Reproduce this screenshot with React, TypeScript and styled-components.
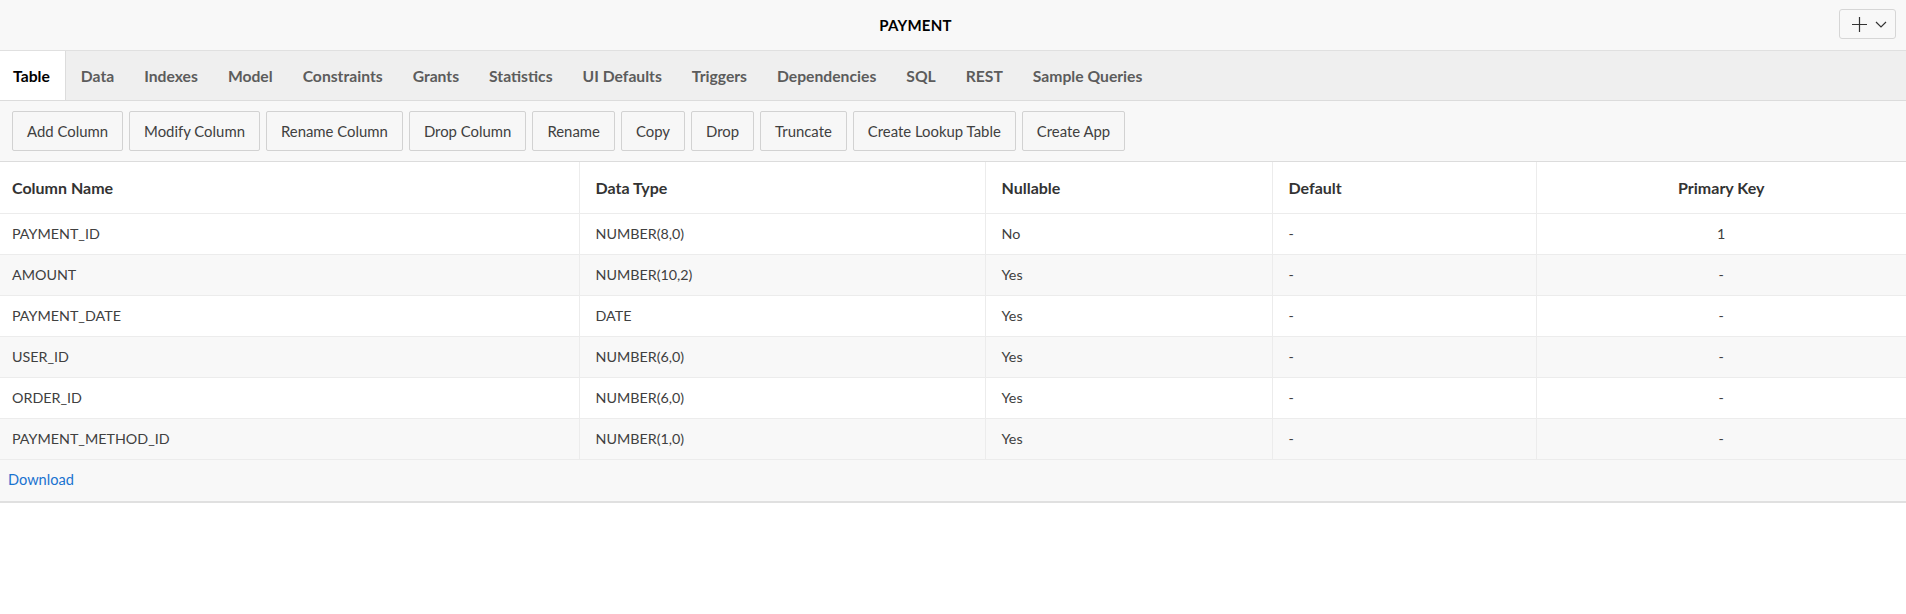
import React from "react";
import styled, { createGlobalStyle } from "styled-components";

const GlobalStyle = createGlobalStyle`
  html, body { margin: 0; padding: 0; background: #ffffff; }
  body { font-family: Lato, "Open Sans", sans-serif; color: #404040; }
  * { box-sizing: border-box; }
`;

const Page = styled.div`
  width: 1906px;
  display: flex;
  flex-direction: column;
`;

const TitleBar = styled.header`
  height: 51px;
  display: flex;
  align-items: center;
  gap: 8px;
  padding-right: 10px;
  background: #f8f8f8;
  border-bottom: 1px solid #e0e0e0;
`;

const Title = styled.h1`
  flex: 1;
  margin: 0;
  text-align: center;
  font-size: 15px;
  font-weight: 700;
  color: #000;
  letter-spacing: 0.2px;
`;

const MenuButton = styled.button`
  width: 57px;
  height: 30px;
  margin-bottom: 2px;
  display: flex;
  align-items: center;
  justify-content: center;
  gap: 7px;
  padding: 0 0 0 2px;
  background: #f8f8f8;
  border: 1px solid #d6d6d6;
  border-radius: 3px;
  color: #333;
`;

const TabBar = styled.nav`
  height: 50px;
  display: flex;
  background: #efefef;
  border-bottom: 1px solid #dcdcdc;
`;

const Tab = styled.div<{ $active?: boolean }>`
  display: flex;
  align-items: center;
  padding: 0 15px;
  font-size: 15.7px;
  font-weight: 700;
  color: ${(p) => (p.$active ? "#000" : "#5c5c5c")};
  background: ${(p) => (p.$active ? "#ffffff" : "transparent")};
  border-right: ${(p) => (p.$active ? "1px solid #dcdcdc" : "none")};
  padding-left: ${(p) => (p.$active ? "13px" : "15px")};
`;

const Toolbar = styled.div`
  display: flex;
  gap: 6px;
  padding: 10px 12px;
  background: #f8f8f8;
  border-bottom: 1px solid #dcdcdc;
`;

const ToolButton = styled.button`
  height: 40px;
  padding: 0 14px;
  font-family: Lato, "Open Sans", sans-serif;
  font-size: 14.9px;
  color: #404040;
  background: #f7f7f7;
  border: 1px solid #d2d2d2;
  border-radius: 2px;
`;

const Table = styled.table`
  width: 100%;
  border-collapse: collapse;
  table-layout: fixed;
`;

const Col = styled.col<{ $w: number }>`
  width: ${(p) => p.$w}px;
`;

const HeadCell = styled.th<{ $center?: boolean; $first?: boolean }>`
  height: 51px;
  padding: 0 ${(p) => (p.$center ? "0" : "16px")} 0 ${(p) => (p.$first ? "12px" : p.$center ? "0" : "16px")};
  text-align: ${(p) => (p.$center ? "center" : "left")};
  font-size: 16px;
  font-weight: 700;
  color: #333;
  background: #fff;
  border-bottom: 1px solid #ececec;
  border-right: 1px solid #ececec;
  &:last-child { border-right: none; }
`;

const Row = styled.tr<{ $alt?: boolean }>`
  background: ${(p) => (p.$alt ? "#f8f8f8" : "#ffffff")};
`;

const Cell = styled.td<{ $center?: boolean; $first?: boolean }>`
  height: 41px;
  padding: 0 ${(p) => (p.$center ? "0" : "16px")} 0 ${(p) => (p.$first ? "12px" : p.$center ? "0" : "16px")};
  text-align: ${(p) => (p.$center ? "center" : "left")};
  font-size: 14.3px;
  color: #404040;
  border-bottom: 1px solid #ececec;
  border-right: 1px solid #ececec;
  &:last-child { border-right: none; }
`;

const Footer = styled.div`
  height: 43px;
  display: flex;
  align-items: center;
  padding: 0 8px 2px;
  background: #f8f8f8;
  border-bottom: 2px solid #e0e0e0;
`;

const DownloadLink = styled.a`
  font-size: 14.6px;
  color: #1a73d0;
  text-decoration: none;
  cursor: pointer;
`;

const PlusIcon = () => (
  <svg width="17" height="17" viewBox="0 0 17 17">
    <path d="M8.5 1v15M1 8.5h15" stroke="#333" strokeWidth="1.2" fill="none" />
  </svg>
);

const ChevronIcon = () => (
  <svg width="12" height="7" viewBox="0 0 12 7">
    <path d="M1 1l5 5 5-5" stroke="#333" strokeWidth="1.2" fill="none" />
  </svg>
);

const tabs = [
  "Table",
  "Data",
  "Indexes",
  "Model",
  "Constraints",
  "Grants",
  "Statistics",
  "UI Defaults",
  "Triggers",
  "Dependencies",
  "SQL",
  "REST",
  "Sample Queries",
];

const actions = [
  "Add Column",
  "Modify Column",
  "Rename Column",
  "Drop Column",
  "Rename",
  "Copy",
  "Drop",
  "Truncate",
  "Create Lookup Table",
  "Create App",
];

const columns = [
  { name: "PAYMENT_ID", type: "NUMBER(8,0)", nullable: "No", def: "-", pk: "1" },
  { name: "AMOUNT", type: "NUMBER(10,2)", nullable: "Yes", def: "-", pk: "-" },
  { name: "PAYMENT_DATE", type: "DATE", nullable: "Yes", def: "-", pk: "-" },
  { name: "USER_ID", type: "NUMBER(6,0)", nullable: "Yes", def: "-", pk: "-" },
  { name: "ORDER_ID", type: "NUMBER(6,0)", nullable: "Yes", def: "-", pk: "-" },
  { name: "PAYMENT_METHOD_ID", type: "NUMBER(1,0)", nullable: "Yes", def: "-", pk: "-" },
];

export default function App() {
  return (
    <>
      <GlobalStyle />
      <Page>
        <TitleBar>
          <Title>PAYMENT</Title>
          <MenuButton aria-label="Actions">
            <PlusIcon />
            <ChevronIcon />
          </MenuButton>
        </TitleBar>
        <TabBar>
          {tabs.map((t, i) => (
            <Tab key={t} $active={i === 0}>
              {t}
            </Tab>
          ))}
        </TabBar>
        <Toolbar>
          {actions.map((a) => (
            <ToolButton key={a}>{a}</ToolButton>
          ))}
        </Toolbar>
        <Table>
          <colgroup>
            <Col $w={579} />
            <Col $w={406} />
            <Col $w={287} />
            <Col $w={264} />
            <Col $w={370} />
          </colgroup>
          <thead>
            <tr>
              <HeadCell $first>Column Name</HeadCell>
              <HeadCell>Data Type</HeadCell>
              <HeadCell>Nullable</HeadCell>
              <HeadCell>Default</HeadCell>
              <HeadCell $center>Primary Key</HeadCell>
            </tr>
          </thead>
          <tbody>
            {columns.map((c, i) => (
              <Row key={c.name} $alt={i % 2 === 1}>
                <Cell $first>{c.name}</Cell>
                <Cell>{c.type}</Cell>
                <Cell>{c.nullable}</Cell>
                <Cell>{c.def}</Cell>
                <Cell $center>{c.pk}</Cell>
              </Row>
            ))}
          </tbody>
        </Table>
        <Footer>
          <DownloadLink>Download</DownloadLink>
        </Footer>
      </Page>
    </>
  );
}
